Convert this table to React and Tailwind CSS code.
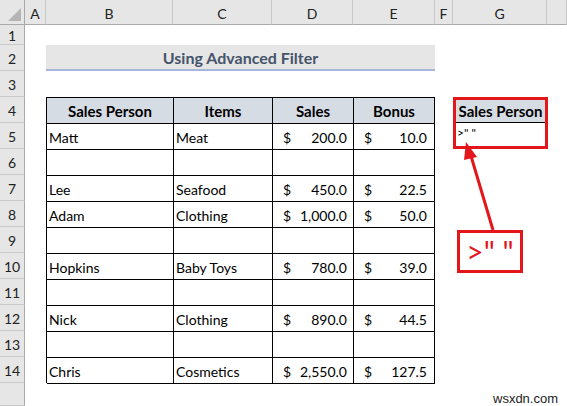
const cols = ["A", "B", "C", "D", "E", "F", "G", ""];

const rows = [
  ["Matt", "Meat", "200.0", "10.0"],
  null,
  ["Lee", "Seafood", "450.0", "22.5"],
  ["Adam", "Clothing", "1,000.0", "50.0"],
  null,
  ["Hopkins", "Baby Toys", "780.0", "39.0"],
  null,
  ["Nick", "Clothing", "890.0", "44.5"],
  null,
  ["Chris", "Cosmetics", "2,550.0", "127.5"],
];

const Money = ({ value, last }) => (
  <div
    className={`flex items-center justify-between border-b border-r border-black pl-[10px] pt-[1px] ${
      last ? "pr-[7px]" : "pr-[6px]"
    }`}
  >
    <span>$</span>
    <span>{value}</span>
  </div>
);

const App = () => {
  return (
    <div className="relative grid h-[406px] w-[567px] grid-cols-[25px_21px_127px_99px_81px_82px_18px_94px_20px] grid-rows-[25px_20px_repeat(13,26px)_23px] overflow-hidden bg-white font-['Lato',sans-serif] text-[14px] text-black">
      {/* column headers */}
      <div className="relative border-b border-r border-[#a9a9a9] bg-[#e6e6e6]">
        <svg className="absolute bottom-[3px] right-[3px]" width="13" height="13">
          <polygon points="13,0 13,13 0,13" fill="#b4b4b4" />
        </svg>
      </div>
      {cols.map((c, i) => (
        <div
          key={i}
          className="flex items-center justify-center border-b border-r border-b-[#a9a9a9] border-r-[#c9c9c9] bg-[#e6e6e6] pt-[2px] text-[14px] text-[#222]"
        >
          {c}
        </div>
      ))}

      {/* row headers */}
      {Array.from({ length: 15 }, (_, i) => (
        <div
          key={i}
          style={{ gridRowStart: i + 2 }}
          className="col-start-1 flex items-center justify-center border-b border-r border-b-[#c9c9c9] border-r-[#a9a9a9] bg-[#e6e6e6] pt-[2px] text-[14px] text-[#222]"
        >
          {i < 14 ? i + 1 : ""}
        </div>
      ))}

      {/* title */}
      <div className="col-span-4 col-start-3 row-start-3 flex items-center justify-center border-b-2 border-[#a8b6da] bg-[#e7e6e6] pt-[1px] text-[16px] font-bold text-[#44546a]">
        Using Advanced Filter
      </div>

      {/* data table */}
      <div className="col-span-4 col-start-3 row-span-11 row-start-5 grid auto-rows-[26px] grid-cols-[127px_99px_81px_81px] border-l border-t border-black">
        {["Sales Person", "Items", "Sales", "Bonus"].map((h) => (
          <div
            key={h}
            className="flex items-center justify-center border-b border-r border-black bg-[#d6dce4] pt-[1px] text-[15px] font-bold"
          >
            {h}
          </div>
        ))}
        {rows.map((r, i) =>
          r ? (
            <div key={i} className="contents">
              <div className="flex items-center border-b border-r border-black pl-[2px] pt-[1px]">{r[0]}</div>
              <div className="flex items-center border-b border-r border-black pl-[2px] pt-[1px]">{r[1]}</div>
              <Money value={r[2]} />
              <Money value={r[3]} last />
            </div>
          ) : (
            <div key={i} className="contents">
              <div className="border-b border-r border-black" />
              <div className="border-b border-r border-black" />
              <div className="border-b border-r border-black" />
              <div className="border-b border-r border-black" />
            </div>
          )
        )}
      </div>

      {/* criteria range */}
      <div className="col-start-8 row-span-2 row-start-5 flex w-[95px] flex-col border-[3px] border-[#e3161c]">
        <div className="flex h-[23px] items-center justify-center border-b border-black bg-[#d6dce4] pt-[1px] text-[15px] font-bold">
          Sales Person
        </div>
        <div className="pl-[1px] pt-[2px] text-[12px] leading-[16px]">&gt;" "</div>
      </div>

      {/* arrow */}
      <svg className="pointer-events-none absolute left-0 top-0" width="567" height="406">
        <line x1="493" y1="230" x2="471" y2="156" stroke="#e3161c" strokeWidth="3" />
        <polygon points="466,142 477,157 464,160" fill="#e3161c" />
      </svg>

      {/* callout */}
      <div className="absolute left-[457px] top-[230px] flex h-[43px] w-[66px] items-end justify-center border-[3px] border-[#e3161c] pb-[4px] text-[30px] leading-none text-[#e3161c]">
        &gt;" "
      </div>

      <div className="absolute left-[493px] top-[389px] font-['Liberation_Sans',sans-serif] text-[13px] text-[#222]">
        wsxdn.com
      </div>
    </div>
  );
};

export default App;
